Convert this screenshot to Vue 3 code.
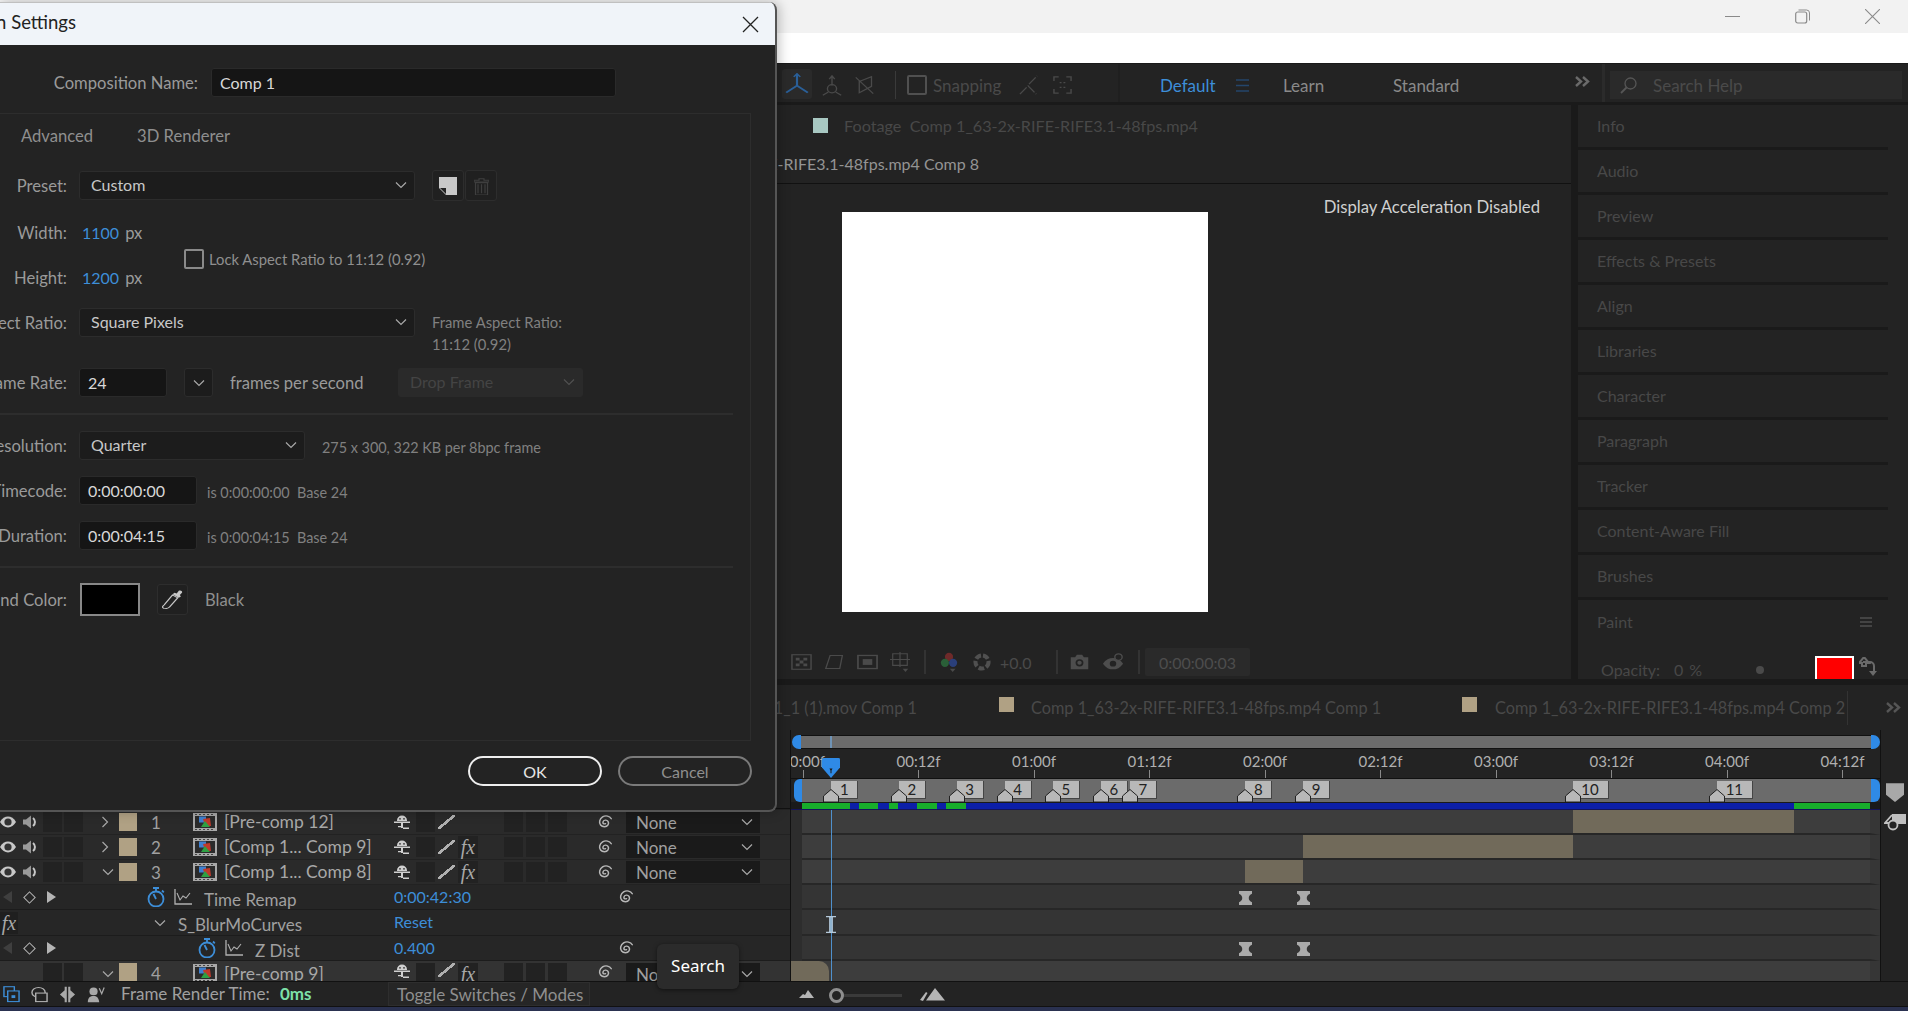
<script setup>
const px = (f) => 11.5 + f * 9.625

const ticks = [
  { f: 0, t: '00:00f' }, { f: 12, t: '00:12f' }, { f: 24, t: '01:00f' }, { f: 36, t: '01:12f' },
  { f: 48, t: '02:00f' }, { f: 60, t: '02:12f' }, { f: 72, t: '03:00f' }, { f: 84, t: '03:12f' },
  { f: 96, t: '04:00f' }, { f: 108, t: '04:12f' },
]
const markers = [3, 10, 16, 21, 26, 31, 34, 46, 52, 80, 95].map((f, i) => ({ f, n: i + 1 }))
const cache = [
  { c: 'g', w: 48 }, { c: 'b', w: 9 }, { c: 'g', w: 19 }, { c: 'b', w: 11 }, { c: 'g', w: 9 },
  { c: 'b', w: 19 }, { c: 'g', w: 20 }, { c: 'b', w: 9 }, { c: 'g', w: 20 }, { c: 'b', w: 828 }, { c: 'g', w: 76 },
]
const panels = ['Info', 'Audio', 'Preview', 'Effects & Presets', 'Align', 'Libraries', 'Character', 'Paragraph', 'Tracker', 'Content-Aware Fill', 'Brushes']
const tracks = [
  { cls: 'lit', clip: [80, 103] },
  { cls: 'lit', clip: [52, 80] },
  { cls: 'lit', clip: [46, 52] },
  { cls: 'sub', keys: [46, 52] },
  { cls: 'sub tall' },
  { cls: 'sub', keys: [46, 52] },
  { cls: 'lit last', clip: [-1.15, 2.8], round: true },
]
</script>

<template>
  <div class="page">
    <svg class="defs" width="0" height="0">
      <defs>
        <symbol id="eye" viewBox="0 0 16 16"><path d="M0 8c2-3.600 5-5.400 8-5.400s6 1.800 8 5.400c-2 3.600-5 5.400-8 5.400S2 11.600 0 8z" fill="#c8c8c8"/><circle cx="8" cy="8" r="3.600" fill="#333"/></symbol>
        <symbol id="speaker" viewBox="0 0 17 14" preserveAspectRatio="none"><path d="M1 4.500h3l5-4v13l-5-4H1z" fill="#9a9a9a"/><path d="M11 3c2.600 2 2.600 6 0 8" fill="none" stroke="#c8c8c8" stroke-width="2"/></symbol>
        <symbol id="src" viewBox="0 0 24 18"><rect width="24" height="18" fill="#a8a8a8"/><path d="M2 1h2v1H2zM6 1h2v1H6zM10 1h2v1h-2zM14 1h2v1h-2zM18 1h2v1h-2zM2 16h2v1H2zM6 16h2v1H6zM10 16h2v1h-2zM14 16h2v1h-2zM18 16h2v1h-2z" fill="#444"/><rect x="2" y="3" width="20" height="12" fill="#2b2b2b"/><rect x="6" y="3.500" width="7" height="6" fill="#3f80d0"/><path d="M10 6l7-1 1 8h-6z" fill="#c0392b"/><path d="M8 14l4-6 5 6z" fill="#2ea043"/></symbol>
        <symbol id="shy" viewBox="0 0 18 14" preserveAspectRatio="none"><path d="M4 5.500a5 5 0 0 1 10 0V6H4z" fill="#d0d0d0"/><path d="M1 6.500h16V8H1z" fill="#d0d0d0"/><path d="M8 8h2v5H8z" fill="#d0d0d0"/><path d="M5 11h3v1.300H5zM10 12.500h6V14h-6z" fill="#d0d0d0"/><circle cx="7" cy="3.800" r=".9" fill="#333"/><circle cx="11" cy="3.800" r=".9" fill="#333"/></symbol>
        <symbol id="spiral" viewBox="0 0 18 18" preserveAspectRatio="none"><path d="M9.500 10.800c-1.500 1-3-.3-2.500-2 .6-2.200 3.800-2.500 5-.5 1.500 2.500-.3 6-3.500 6-3.300 0-5.500-3-4.800-6.500C4.500 3.800 8 1.500 11.500 2.300c1.800.5 3 1.600 3.800 3" fill="none" stroke="#b8b8b8" stroke-width="1.500" stroke-linecap="round"/></symbol>
        <symbol id="watch" viewBox="0 0 18 20" preserveAspectRatio="none"><circle cx="9" cy="12" r="7.500" fill="none" stroke="#3d8ed8" stroke-width="1.800"/><path d="M6 1h6M9 1v3M9 12L6.500 7M15 3.500l1.800 1.800" stroke="#3d8ed8" stroke-width="1.800" fill="none"/></symbol>
        <symbol id="graph" viewBox="0 0 18 16" preserveAspectRatio="none"><path d="M1 0v15h17" fill="none" stroke="#b0b0b0" stroke-width="1.300"/><path d="M3 4l3 7 3-4 3 2 4-5" fill="none" stroke="#b0b0b0" stroke-width="1.100"/></symbol>
        <symbol id="chev" viewBox="0 0 12 8"><path d="M1 1.500l5 5 5-5" fill="none" stroke="#a8a8a8" stroke-width="1.200"/></symbol>
        <symbol id="key" viewBox="0 0 16 18" preserveAspectRatio="none"><path d="M0 0h16v3.500c-2.500 1-4 3-4 5.500s1.500 4.500 4 5.500V18H0v-3.500c2.500-1 4-3 4-5.500s-1.500-4.500-4-5.500z" fill="#ababab"/></symbol>
      </defs>
    </svg>

    <div class="titlebar">
      <svg class="winbtn" viewBox="0 0 15 15"><path d="M0 7.500h15" stroke="#8a8a8a" stroke-width="1"/></svg>
      <svg class="winbtn" viewBox="0 0 15 15"><rect x=".7" y="3" width="11" height="11" rx="2" fill="none" stroke="#8a8a8a" stroke-width="1.200"/><path d="M3.500 1h8a3 3 0 0 1 3 3v7.500" fill="none" stroke="#8a8a8a"/></svg>
      <svg class="winbtn" viewBox="0 0 15 15"><path d="M0 0l15 15M15 0L0 15" stroke="#8a8a8a" stroke-width="1.100"/></svg>
    </div>
    <div class="menustrip"></div>

    <div class="toolbar">
      <div class="tool-active">
        <svg width="26" height="22" viewBox="0 0 24 28" preserveAspectRatio="none"><path d="M12 1v15M12 16L2 25M12 16l10 9" stroke="#2a5f98" stroke-width="2" fill="none"/><path d="M9 5l3-4 3 4" stroke="#2a5f98" stroke-width="1.500" fill="none"/></svg>
      </div>
      <svg class="tool-ic first" width="22" height="21" viewBox="0 0 24 26" preserveAspectRatio="none"><path d="M12 1v12M9 5l3-4 3 4" stroke="#4a4a4a" stroke-width="1.500" fill="none"/><circle cx="12" cy="17" r="5" fill="none" stroke="#4a4a4a" stroke-width="1.500"/><path d="M8 21l-6 4M16 21l6 4" stroke="#4a4a4a" stroke-width="1.500"/></svg>
      <svg class="tool-ic" width="21" height="21" viewBox="0 0 24 26" preserveAspectRatio="none"><path d="M2 3l20 20M6 8l14-6v12L6 22z" stroke="#4a4a4a" stroke-width="1.500" fill="none"/></svg>
      <div class="tool-sep"></div>
      <span class="snap-box"></span>
      <span class="snap-text">Snapping</span>
      <svg class="tool-ic snap1" width="20" height="20" viewBox="0 0 22 24" preserveAspectRatio="none"><path d="M1 23l9-10 9 10M11 11l9-10" stroke="#4a4a4a" stroke-width="1.500" fill="none" stroke-dasharray="11 2"/></svg>
      <svg class="tool-ic snap2" width="19" height="18" viewBox="0 0 20 22" preserveAspectRatio="none"><path d="M1 6V1h5M14 1h5v5M19 16v5h-5M6 21H1v-5M7 8h2M11 8h2M7 14h2M11 14h2" stroke="#4a4a4a" stroke-width="1.500" fill="none"/></svg>
      <div class="ws-sep"></div>
      <span class="ws default">Default</span>
      <svg class="ws-menu" width="14" height="13" viewBox="0 0 14 13"><path d="M0 1h13M0 6.500h13M0 12h13" stroke="#24466b" stroke-width="1.500"/></svg>
      <span class="ws learn">Learn</span>
      <span class="ws standard">Standard</span>
      <svg class="more" width="15" height="11" viewBox="0 0 15 11"><path d="M1 1l5 4.500L1 10M8 1l5 4.500L8 10" fill="none" stroke="#6a6a6a" stroke-width="2.400"/></svg>
      <div class="help-sep"></div>
      <div class="help">
        <svg width="17" height="17" viewBox="0 0 17 17"><circle cx="10.500" cy="6.500" r="5.500" fill="none" stroke="#565656" stroke-width="1.300"/><path d="M6.500 10.500L1 16" stroke="#565656" stroke-width="1.800"/></svg>
        <span>Search Help</span>
      </div>
    </div>

    <div class="main">
      <div class="viewer-col">
        <div class="footage-tab"><i class="sw teal"></i><span>Footage&nbsp; Comp 1_63-2x-RIFE-RIFE3.1-48fps.mp4</span></div>
        <div class="comp-tab"><span>Comp 1_63-2x-RIFE-RIFE3.1-48fps.mp4 Comp 8</span></div>
        <div class="stage">
          <div class="canvas"></div>
          <span class="accel">Display Acceleration Disabled</span>
        </div>
        <div class="viewbar">
          <svg class="vb" width="21" height="16" viewBox="0 0 22 22" preserveAspectRatio="none"><rect x="1" y="1" width="20" height="20" fill="none" stroke="#4a4a4a" stroke-width="1.500"/><path d="M5 5h4v4H5zM13 5h4v4h-4zM9 9h4v4H9zM5 13h4v4H5zM13 13h4v4h-4z" fill="#4a4a4a"/></svg>
          <svg class="vb" width="21" height="16" viewBox="0 0 24 22" preserveAspectRatio="none"><path d="M7 2h14l-3 18H2z" fill="none" stroke="#4a4a4a" stroke-width="1.500"/></svg>
          <svg class="vb" width="21" height="16" viewBox="0 0 22 22" preserveAspectRatio="none"><rect x="1" y="2" width="20" height="18" fill="none" stroke="#4a4a4a" stroke-width="1.800"/><rect x="6" y="7" width="10" height="8" fill="#4a4a4a"/></svg>
          <svg class="vb" width="20" height="20" viewBox="0 0 22 24" preserveAspectRatio="none"><path d="M3 2h16v14H3zM11 0v18M0 9h22" fill="none" stroke="#4a4a4a" stroke-width="1.300"/><path d="M14 20h6l-3 4z" fill="#4a4a4a"/></svg>
          <i class="vb-sep"></i>
          <svg class="vb" width="18" height="20" viewBox="0 0 22 24" preserveAspectRatio="none"><circle cx="11" cy="6" r="5" fill="#6e2a2a"/><circle cx="6" cy="13" r="5" fill="#2a5f38"/><circle cx="16" cy="13" r="5" fill="#2a3f7a"/><path d="M12 20h7l-3.500 4z" fill="#4a4a4a"/></svg>
          <svg class="vb aperture" width="18" height="18" viewBox="0 0 22 22"><circle cx="11" cy="11" r="8" fill="none" stroke="#505050" stroke-width="5" stroke-dasharray="7 2.500"/></svg>
          <span class="exposure">+0.0</span>
          <i class="vb-sep"></i>
          <svg class="vb camera" width="21" height="16" viewBox="0 0 24 20" preserveAspectRatio="none"><path d="M2 4h5l2-3h6l2 3h5v15H2z" fill="#4d4d4d"/><circle cx="12" cy="11" r="4.500" fill="#232323"/><circle cx="12" cy="11" r="2.500" fill="#4d4d4d"/></svg>
          <svg class="vb" width="22" height="18" viewBox="0 0 24 22" preserveAspectRatio="none"><path d="M1 13c3-5 7-7 11-7s8 2 11 7c-3 5-7 7-11 7S4 18 1 13z" fill="#4d4d4d"/><circle cx="12" cy="13" r="3.500" fill="#232323"/><circle cx="18" cy="5" r="4" fill="#232323" stroke="#4d4d4d" stroke-width="1.500"/></svg>
          <i class="vb-sep"></i>
          <span class="vb-time">0:00:00:03</span>
        </div>
      </div>
      <div class="panels">
        <div v-for="p in panels" :key="p" class="pitem">{{ p }}</div>
        <div class="pitem paint">
          <span>Paint</span>
          <svg width="12" height="10" viewBox="0 0 12 10"><path d="M0 1h12M0 5h12M0 9h12" stroke="#505050" stroke-width="1.300"/></svg>
        </div>
        <div class="opacity">
          <span>Opacity:</span><span class="op-val">0</span><span>%</span>
          <i class="op-dot"></i>
          <i class="red"></i>
          <svg class="swap" width="18" height="20" viewBox="0 0 18 20"><path d="M5 0L0 6h3v3h4V6h3zM4 5h7a4 4 0 0 1 4 4v5" fill="none" stroke="#6a6a6a" stroke-width="2"/><path d="M10 14h8l-4 5z" fill="#6a6a6a"/></svg>
        </div>
      </div>
    </div>

    <div class="timeline">
      <div class="tl-tabs">
        <div class="tl-tab1">Comp 1_63-2x-RIFE-RIFE3.1_1 (1).mov Comp 1</div>
        <i class="sw tan tl-sw"></i>
        <span class="tl-text">Comp 1_63-2x-RIFE-RIFE3.1-48fps.mp4 Comp 1</span>
        <i class="sw tan tl-sw2"></i>
        <span class="tl-text t2">Comp 1_63-2x-RIFE-RIFE3.1-48fps.mp4 Comp 2</span>
        <i class="tl-end"></i>
        <svg class="tl-more" width="15" height="11" viewBox="0 0 15 11"><path d="M1 1l5 4.500L1 10M8 1l5 4.500L8 10" fill="none" stroke="#565656" stroke-width="2.400"/></svg>
      </div>

      <div class="tl-body">
        <div class="layers">
          <div class="layers-head"></div>

          <div class="layer">
            <svg class="i16"><use href="#eye"/></svg><svg class="ispk"><use href="#speaker"/></svg><i class="cell"></i><i class="cell"></i>
            <svg class="ichev rot"><use href="#chev"/></svg><i class="sw tan ls"></i><span class="num">1</span>
            <svg class="isrc"><use href="#src"/></svg><span class="name">[Pre-comp 12]</span>
            <svg class="ishy"><use href="#shy"/></svg><i class="cell"></i><span class="slash"></span><i class="nofx"></i><b></b>
            <i class="cell"></i><i class="cell"></i><i class="cell"></i><b></b>
            <svg class="ispi"><use href="#spiral"/></svg>
            <div class="drop"><span>None</span><svg class="ichev"><use href="#chev"/></svg></div>
          </div>
          <div class="layer">
            <svg class="i16"><use href="#eye"/></svg><svg class="ispk"><use href="#speaker"/></svg><i class="cell"></i><i class="cell"></i>
            <svg class="ichev rot"><use href="#chev"/></svg><i class="sw tan ls"></i><span class="num">2</span>
            <svg class="isrc"><use href="#src"/></svg><span class="name">[Comp 1... Comp 9]</span>
            <svg class="ishy"><use href="#shy"/></svg><i class="cell"></i><span class="slash"></span><em class="fx">fx</em><b></b>
            <i class="cell"></i><i class="cell"></i><i class="cell"></i><b></b>
            <svg class="ispi"><use href="#spiral"/></svg>
            <div class="drop"><span>None</span><svg class="ichev"><use href="#chev"/></svg></div>
          </div>
          <div class="layer open">
            <svg class="i16"><use href="#eye"/></svg><svg class="ispk"><use href="#speaker"/></svg><i class="cell"></i><i class="cell"></i>
            <svg class="ichev"><use href="#chev"/></svg><i class="sw tan ls"></i><span class="num">3</span>
            <svg class="isrc"><use href="#src"/></svg><span class="name">[Comp 1... Comp 8]</span>
            <svg class="ishy"><use href="#shy"/></svg><i class="cell"></i><span class="slash"></span><em class="fx">fx</em><b></b>
            <i class="cell"></i><i class="cell"></i><i class="cell"></i><b></b>
            <svg class="ispi"><use href="#spiral"/></svg>
            <div class="drop"><span>None</span><svg class="ichev"><use href="#chev"/></svg></div>
          </div>

          <div class="prop">
            <div class="nav"><i class="tri l"></i><i class="dia"></i><i class="tri r"></i></div>
            <div class="pname d1">
              <svg class="iwatch"><use href="#watch"/></svg><svg class="igraph"><use href="#graph"/></svg><span>Time Remap</span>
            </div>
            <span class="val">0:00:42:30</span>
            <svg class="ispi sp2"><use href="#spiral"/></svg>
          </div>
          <div class="prop tall">
            <div class="nav"><em class="fx fx0">fx</em></div>
            <div class="pname d0">
              <svg class="ichev"><use href="#chev"/></svg><span>S_BlurMoCurves</span>
            </div>
            <span class="val">Reset</span>
          </div>
          <div class="prop">
            <div class="nav"><i class="tri l"></i><i class="dia"></i><i class="tri r"></i></div>
            <div class="pname d2">
              <svg class="iwatch"><use href="#watch"/></svg><svg class="igraph"><use href="#graph"/></svg><span>Z Dist</span>
            </div>
            <span class="val">0.400</span>
            <svg class="ispi sp2"><use href="#spiral"/></svg>
          </div>

          <div class="layer sel">
            <i class="cell none"></i><i class="cell none"></i><i class="cell"></i><i class="cell"></i>
            <svg class="ichev"><use href="#chev"/></svg><i class="sw tan ls"></i><span class="num">4</span>
            <svg class="isrc"><use href="#src"/></svg><span class="name">[Pre-comp 9]</span>
            <svg class="ishy"><use href="#shy"/></svg><i class="cell"></i><span class="slash"></span><em class="fx">fx</em><b></b>
            <i class="cell"></i><i class="cell"></i><i class="cell"></i><b></b>
            <svg class="ispi"><use href="#spiral"/></svg>
            <div class="drop"><span>None</span><svg class="ichev"><use href="#chev"/></svg></div>
          </div>
        </div>

        <div class="tracks">
          <div class="workbar">
            <i class="wb-handle left"></i>
            <div class="wb-fill"><i class="wb-mark"></i></div>
            <i class="wb-handle right"></i>
          </div>
          <div class="ruler">
            <div v-for="t in ticks" :key="t.f" class="tick" :style="{ left: px(t.f) + 'px' }"><span>{{ t.t }}</span><i></i></div>
            <svg class="head" width="18" height="20" viewBox="0 0 18 21" preserveAspectRatio="none"><path d="M0 1.500Q0 0 1.500 0h15Q18 0 18 1.500V10l-9 11-9-11z" fill="#2f8ae6"/><path d="M7.500 11h3l-1 2v3h-1v-3z" fill="#1a1a1a"/></svg>
          </div>
          <div class="markerbar">
            <i class="mb-handle left"></i>
            <div class="mb-fill"></div>
            <i class="mb-handle right"></i>
            <div v-for="m in markers" :key="m.n" class="marker" :style="{ left: px(m.f) + 'px' }">
              <span class="m-label" :class="{ wide: m.n > 9 }">{{ m.n }}</span>
              <svg class="m-home" width="16" height="13" viewBox="0 0 16 13"><path d="M.5 13V7L8 .5 15.500 7v6z" fill="#b8b8b8" stroke="#222" stroke-width="1"/></svg>
            </div>
          </div>
          <div class="cachebar">
            <i v-for="(s, i) in cache" :key="i" :class="s.c" :style="{ width: s.w + 'px' }"></i>
          </div>
          <div class="rows">
            <div v-for="(t, i) in tracks" :key="i" class="trow" :class="t.cls">
              <div
                v-if="t.clip"
                class="clip"
                :class="{ rounded: t.round }"
                :style="{ left: px(t.clip[0]) - 11 + 'px', width: (t.clip[1] - t.clip[0]) * 9.625 + 'px' }"
              ></div>
              <svg v-for="k in t.keys || []" :key="k" class="kf" :style="{ left: px(k) - 17.5 + 'px' }"><use href="#key"/></svg>
            </div>
            <div class="playline"></div>
            <svg class="ibeam" width="10" height="17" viewBox="0 0 10 17"><path d="M0 .7h10M0 16.300h10" stroke="#b5c9da" stroke-width="1.300"/><path d="M3.500 1h3v15h-3z" fill="#8fb3cf" stroke="#b5c9da" stroke-width=".8"/></svg>
          </div>
        </div>

        <div class="sidecol">
          <svg class="bin" width="18" height="21" viewBox="0 0 18 23" preserveAspectRatio="none"><path d="M0 1.500h18V14l-9 8-9-8z" fill="#a8a8a8"/></svg>
          <svg class="cm" width="22" height="20" viewBox="0 0 22 20"><path d="M8 2h14v10H8z" fill="#c0c0c0"/><path d="M8 3L1 11h6" fill="none" stroke="#c0c0c0" stroke-width="1.800"/><circle cx="9" cy="13" r="4.500" fill="#232323" stroke="#c0c0c0" stroke-width="1.800"/></svg>
        </div>
      </div>

      <div class="statusbar">
        <div class="st-icons">
          <svg width="17" height="17" viewBox="0 0 18 24" preserveAspectRatio="none"><rect x="1" y="1" width="11" height="14" fill="none" stroke="#3d8ed8" stroke-width="1.500"/><rect x="5" y="7" width="12" height="15" fill="#232323" stroke="#3d8ed8" stroke-width="1.500"/><rect x="9" y="13" width="4" height="4" fill="#3d8ed8"/></svg>
          <svg width="17" height="17" viewBox="0 0 18 24" preserveAspectRatio="none"><circle cx="8" cy="9" r="7" fill="none" stroke="#b0b0b0" stroke-width="1.500"/><rect x="5" y="10" width="12" height="12" fill="#232323" stroke="#b0b0b0" stroke-width="1.500"/></svg>
          <svg width="17" height="17" viewBox="0 0 18 24" preserveAspectRatio="none"><path d="M6 1h6v5l5 6-5 6v5H6v-5L1 12l5-6z" fill="#a8a8a8"/><path d="M9 0v24" stroke="#232323" stroke-width="1.500"/></svg>
          <svg width="18" height="17" viewBox="0 0 22 22" preserveAspectRatio="none"><circle cx="8" cy="7" r="5" fill="#a8a8a8"/><path d="M1 21c0-6 3-8 7-8s6 2 7 8z" fill="#a8a8a8"/><path d="M15 3l3 7 3-8" fill="none" stroke="#a8a8a8" stroke-width="1.500"/></svg>
        </div>
        <span class="st-label">Frame Render Time:</span>
        <span class="st-ms">0ms</span>
        <div class="st-toggle">Toggle Switches / Modes</div>
        <div class="zoomer">
          <svg width="15" height="8" viewBox="0 0 15 8"><path d="M0 8l4-4 2 1 3-5 6 8z" fill="#b5b5b5"/></svg>
          <div class="slider"><i class="knob"></i></div>
          <svg width="25" height="13" viewBox="0 0 25 13"><path d="M0 12l6-8 1.500 1L3 13zM6 12.500L15 0l10 12.500z" fill="#b5b5b5"/></svg>
        </div>
      </div>
    </div>
    <div class="taskstrip"></div>

    <div class="dialog">
      <div class="dlg-title">
        <span class="dlg-name">Composition Settings</span>
        <svg width="17" height="17" viewBox="0 0 17 17"><path d="M1 1l15 15M16 1L1 16" stroke="#222" stroke-width="1.300"/></svg>
      </div>
      <div class="dlg-body">
        <div class="name-row">
          <label class="lbl name-lbl">Composition Name:</label>
          <div class="field name-field">Comp 1</div>
        </div>
        <div class="group">
          <div class="tabs"><span class="tab-clip"><span>Basic</span></span><span>Advanced</span><span class="tab3d">3D Renderer</span></div>

          <div class="frow r-preset">
            <label class="lbl">Preset:</label>
            <div class="select wide"><span>Custom</span><svg class="ichev"><use href="#chev"/></svg></div>
            <button class="sq first">
              <svg width="18" height="18" viewBox="0 0 18 18"><path d="M0 0h18v18H7l-7-7z" fill="#c8c8c8"/><path d="M1 11h6v6z" fill="#222"/></svg>
            </button>
            <button class="sq">
              <svg width="15" height="18" viewBox="0 0 15 22" preserveAspectRatio="none"><path d="M5 2h5v2h5v2H0V4h5zM1.500 7h12v15h-12zM4 9v11M7.500 9v11M11 9v11" fill="none" stroke="#3f3f3f" stroke-width="1.200"/></svg>
            </button>
          </div>

          <div class="dims">
            <div class="dim-col">
              <div class="frow dim"><label class="lbl">Width:</label><span class="blue">1100</span><span class="unit">px</span></div>
              <div class="frow dim"><label class="lbl">Height:</label><span class="blue">1200</span><span class="unit">px</span></div>
            </div>
            <div class="lock"><i class="check"></i><span>Lock Aspect Ratio to 11:12 (0.92)</span></div>
          </div>

          <div class="frow r-par">
            <label class="lbl">Pixel Aspect Ratio:</label>
            <div class="select wide"><span>Square Pixels</span><svg class="ichev"><use href="#chev"/></svg></div>
            <div class="far"><div>Frame Aspect Ratio:</div><div>11:12 (0.92)</div></div>
          </div>

          <div class="frow r-rate">
            <label class="lbl">Frame Rate:</label>
            <div class="field rate">24</div>
            <div class="select mini"><svg class="ichev"><use href="#chev"/></svg></div>
            <span class="txt fps">frames per second</span>
            <div class="select disabled"><span>Drop Frame</span><svg class="ichev"><use href="#chev"/></svg></div>
          </div>

          <hr class="sep" />

          <div class="frow r-res">
            <label class="lbl">Resolution:</label>
            <div class="select res"><span>Quarter</span><svg class="ichev"><use href="#chev"/></svg></div>
            <span class="note">275 x 300, 322 KB per 8bpc frame</span>
          </div>
          <div class="frow r-tc">
            <label class="lbl">Start Timecode:</label>
            <div class="field tc">0:00:00:00</div>
            <span class="note tcn">is 0:00:00:00&nbsp; Base 24</span>
          </div>
          <div class="frow r-tc">
            <label class="lbl">Duration:</label>
            <div class="field tc">0:00:04:15</div>
            <span class="note tcn">is 0:00:04:15&nbsp; Base 24</span>
          </div>

          <hr class="sep s2" />

          <div class="frow r-bg">
            <label class="lbl">Background Color:</label>
            <i class="swatch"></i>
            <button class="sq drop-btn">
              <svg width="21" height="20" viewBox="0 0 20 28" preserveAspectRatio="none"><path d="M16 1c2-1 4 1 3 3l-2 3 1 2-2 2-6-5 2-2 2 1z" fill="#c8c8c8"/><path d="M10 7l5 4-8 13c-1 2-5 3-6 1-1-1 0-3 1-4z" fill="#232323" stroke="#c8c8c8" stroke-width="1.300"/></svg>
            </button>
            <span class="txt black">Black</span>
          </div>
        </div>
        <div class="actions">
          <button class="pill ok">OK</button>
          <button class="pill cancel">Cancel</button>
        </div>
      </div>
    </div>

    <div class="tooltip">Search</div>
  </div>
</template>

<style>
html, body { margin: 0; background: #232323; overflow: hidden; }
</style>

<style scoped>
.page {
  position: relative;
  width: 1908px;
  height: 1011px;
  overflow: hidden;
  display: flex;
  flex-direction: column;
  background: #1a1a1a;
  font-family: "Lato", "Noto Sans", sans-serif;
  font-size: 16px;
  color: #a0a0a0;
}
.defs { position: absolute; }
i, em { display: block; font-style: normal; }

.titlebar { height: 33px; background: #f2f2f2; display: flex; justify-content: flex-end; align-items: center; padding-right: 28px; gap: 55px; flex: none; }
.winbtn { width: 15px; height: 15px; margin-top: -1px; }
.menustrip { height: 30px; background: #fff; flex: none; }

.toolbar { height: 38px; box-sizing: border-box; padding: 4px 0 0 782px; margin-top: 1px; background: #232323; flex: none; display: flex; align-items: center; font-size: 17px; }
.tool-active { width: 30px; height: 30px; background: #2a2a2a; border-radius: 3px; display: flex; justify-content: center; align-items: center; margin-top: -2px; }
.tool-ic.first { margin-left: 9px; }
.tool-ic { margin-left: 11px; }
.tool-sep { width: 1px; height: 28px; background: #3a3a3a; margin-left: 20px; }
.snap-box { width: 20px; height: 20px; box-sizing: border-box; border: 2px solid #505050; border-radius: 2px; margin-left: 11px; }
.snap-text { color: #4a4a4a; margin-left: 6px; width: 74px; }
.tool-ic.snap1 { margin-left: 12px; }
.tool-ic.snap2 { margin-left: 14px; }
.ws-sep { width: 2px; height: 38px; background: #1f1f1f; margin: -4px 0 0 46px; align-self: flex-start; }
.ws { color: #8a8a8a; }
.default { color: #3d8ed8; margin-left: 40px; width: 58px; }
.ws-menu { margin-left: 18px; }
.learn { margin-left: 33px; width: 110px; }
.standard { width: 182px; }
.more { margin-top: -8px; }
.help-sep { width: 3px; height: 38px; background: #2b2b2b; margin: -4px 0 0 12px; align-self: flex-start; }
.help { width: 292px; height: 28px; margin-left: 5px; background: #2a2a2a; display: flex; align-items: center; gap: 16px; padding-left: 10px; box-sizing: border-box; color: #4a4a4a; }

.main { flex: none; height: 574px; margin-top: 3px; display: flex; gap: 7px; }
.viewer-col { width: 1571px; display: flex; flex-direction: column; background: #232323; }
.footage-tab { height: 41px; padding-left: 813px; display: flex; align-items: center; gap: 16px; color: #484848; flex: none; padding-bottom: 1px; box-sizing: border-box; font-size: 16.200px; }
.sw { width: 15px; height: 15px; flex: none; }
.teal { background: #a8c8c2; }
.tan { background: #b0a184; }
.comp-tab { height: 38px; flex: none; border-bottom: 1px solid #111; display: flex; align-items: center; justify-content: flex-end; box-sizing: border-box; padding: 0 592px 2px 0; color: #949494; white-space: nowrap; }
.stage { flex: 1; min-height: 0; display: flex; justify-content: space-between; padding: 28px 31px 0 842px; }
.canvas { width: 366px; height: 400px; background: #fff; }
.accel { color: #d0d0d0; font-size: 16.700px; margin-top: -15px; height: 24px; }
.viewbar { height: 34px; flex: none; display: flex; align-items: center; padding-left: 791px; }
.vb { margin-right: 12px; flex: none; }
.vb-sep { width: 2px; height: 24px; background: #333; margin: 0 14px 0 2px; flex: none; }
.aperture { margin-left: 3px; }
.exposure { color: #4a4a4a; width: 54px; margin-left: -3px; }
.camera { margin-left: -3px; }
.vb-time { width: 105px; height: 28px; margin-left: -9px; background: #2a2a2a; color: #4d4d4d; display: flex; align-items: center; justify-content: center; border-radius: 2px; }

.panels { flex: 1; background: #232323; display: flex; flex-direction: column; color: #484848; overflow: hidden; }
.pitem { height: 45px; flex: none; box-sizing: border-box; width: 310px; border-bottom: 3px solid #1a1a1a; display: flex; align-items: center; padding-left: 19px; padding-bottom: 2px; }
.paint { justify-content: space-between; border-bottom: 0; width: 294px; }
.opacity { display: flex; align-items: center; padding-left: 23px; height: 23px; margin-top: 13px; flex: none; }
.op-val { margin: 0 6px 0 14px; }
.op-dot { width: 8px; height: 8px; border-radius: 50%; background: #4a4a4a; margin-left: 54px; }
.red { width: 39px; height: 26px; box-sizing: border-box; border: 2px solid #fff; border-bottom: 0; background: #f00; margin: -2px 0 0 51px; align-self: flex-start; }
.swap { margin: -6px 0 0 5px; }

.timeline { flex: none; margin-top: 6px; height: 321px; background: #232323; display: flex; flex-direction: column; }
.tl-tabs { height: 45px; flex: none; display: flex; align-items: center; color: #494949; white-space: nowrap; font-size: 16.300px; }
.tl-tab1 { width: 917px; text-align: right; flex: none; }
.tl-sw { margin-left: 82px; margin-top: -7px; }
.tl-sw2 { margin-top: -7px; }
.tl-text { margin-left: 17px; width: 431px; flex: none; }
.tl-text.t2 { margin-left: 18px; width: 352px; }
.tl-end { width: 1px; height: 34px; background: #333; flex: none; }
.tl-more { margin-left: 38px; }

.tl-body { flex: 1; min-height: 0; display: flex; }
.layers { width: 790px; flex: none; display: flex; flex-direction: column; border-right: 1px solid #111; overflow: hidden; height: 251px; }
.layers-head { height: 78px; flex: none; border-bottom: 1px solid #111; margin-bottom: 1px; }
.layer {
  height: 25px; flex: none; box-sizing: border-box;
  display: grid;
  grid-template-columns: 22px 21px 21px 22px 29px 25px 50px 31px 172px 23px 20px 22px 22px 24px 22px 22px 22px 26px 30px 134px 1fr;
  align-items: center;
  background: #2a2a2a;
  border-bottom: 1px solid #222;
  white-space: nowrap;
  font-size: 17px;
}
.layer.sel { height: 21px; background: #333; align-items: start; padding-top: 2px; border-bottom: 0; flex: 1; }
.layer.sel .ichev { margin-top: 7px; }
.layer.sel .drop .ichev { margin-top: 0; }
.layer.sel .ishy, .layer.sel .isrc, .layer.sel .ispi { margin-top: 1px; }
.i16 { width: 16px; height: 16px; }
.ispk { width: 17px; height: 14px; }
.cell { width: 19px; height: 20px; background: #222; }
.cell.none { background: transparent; }
.ichev { width: 12px; height: 8px; margin-left: 16px; }
.ichev.rot { transform: rotate(-90deg); margin-left: 13px; }
.ls { width: 18px; height: 18px; margin-left: 4px; }
.num { padding-left: 11px; }
.isrc { width: 24px; height: 18px; margin-left: 3px; }
.name { color: #a8a8a8; overflow: hidden; margin: -1px 0 0 3px; font-size: 17.500px; line-height: 23px; }
.ishy { width: 18px; height: 14px; }
.slash { width: 17px; height: 14px; margin-left: 2px; background: linear-gradient(to top left, transparent 44%, #b0b0b0 44%, #b0b0b0 56%, transparent 56%); }
.fx { font-family: "Liberation Serif", serif; font-style: italic; font-size: 20px; color: #a8a8a8; background: #222; width: 20px; text-align: center; line-height: 22px; }
.nofx { width: 20px; }
.ispi { width: 18px; height: 16px; }
.drop { background: #1a1a1a; height: 22px; display: flex; align-items: center; justify-content: space-between; padding: 0 7px 0 10px; color: #a0a0a0; }
.drop .ichev { margin: 0; }
.prop { height: 25px; flex: none; display: flex; align-items: center; background: #262626; border-bottom: 1px solid #1c1c1c; box-sizing: border-box; }
.prop.tall { height: 26px; }
.nav { width: 66px; flex: none; display: flex; align-items: center; gap: 11px; padding-left: 3px; box-sizing: border-box; }
.tri { width: 0; height: 0; border-top: 6px solid transparent; border-bottom: 6px solid transparent; }
.tri.l { border-right: 9px solid #3f3f3f; }
.tri.r { border-left: 9px solid #b5b5b5; }
.dia { width: 9px; height: 9px; box-sizing: border-box; border: 1.500px solid #b5b5b5; transform: rotate(45deg); margin: 0 2px; }
.fx0 { background: #1f1f1f; margin-left: -3px; width: 18px; }
.pname { width: 328px; flex: none; display: flex; align-items: center; box-sizing: border-box; color: #a0a0a0; font-size: 17px; }
.pname span { margin-top: 4px; }
.pname.d1 { padding-left: 81px; }
.pname.d2 { padding-left: 132px; }
.pname.d0 { padding-left: 88px; }
.pname.d0 .ichev { margin: 0 12px 0 0; }
.iwatch { width: 18px; height: 20px; }
.igraph { width: 18px; height: 16px; margin: 0 12px 0 9px; }
.val { color: #3d8ed8; width: 223px; flex: none; margin-top: -2px; }

.tracks { width: 1089px; flex: none; display: flex; flex-direction: column; position: relative; overflow: hidden; }
.workbar { height: 14px; margin-top: 5px; flex: none; display: flex; align-items: stretch; }
.wb-handle { width: 9px; background: #2f8ae6; }
.wb-handle.left { border-radius: 7px 0 0 7px; margin-left: 1px; }
.wb-handle.right { border-radius: 0 7px 7px 0; }
.wb-fill { flex: 1; background: #6b6b6b; border-top: 1px solid #111; border-bottom: 1px solid #111; position: relative; }
.wb-mark { position: absolute; left: 29px; top: 0; width: 2px; height: 100%; background: #6f93b5; }
.ruler { height: 30px; flex: none; position: relative; border-bottom: 1px solid #111; box-sizing: border-box; overflow: hidden; }
.tick { position: absolute; top: 0; bottom: 0; width: 1px; display: flex; flex-direction: column; align-items: center; }
.tick span { font-size: 15px; color: #b0b0b0; line-height: 16px; margin-top: 4px; white-space: nowrap; }
.tick i { width: 1px; flex: 1; background: #8a8a8a; margin-top: 1px; }
.head { position: absolute; left: 31px; top: 9px; }
.markerbar { height: 23px; flex: none; display: flex; position: relative; }
.mb-handle { width: 9px; background: #2f8ae6; }
.mb-handle.left { border-radius: 6px 0 0 6px; margin-left: 3px; width: 8px; }
.mb-handle.right { border-radius: 0 6px 6px 0; }
.mb-fill { flex: 1; background: #6b6b6b; }
.marker { position: absolute; top: 0; width: 0; height: 23px; }
.m-label { position: absolute; left: 0; top: 2px; width: 27px; height: 18px; box-sizing: border-box; background: #b8b8b8; color: #222; border-right: 1px solid #444; border-bottom: 1px solid #444; font-size: 15px; line-height: 17px; text-align: center; }
.m-label.wide { width: 36px; }
.m-home { position: absolute; left: -8px; top: 10px; }
.cachebar { height: 8px; flex: none; display: flex; padding: 1px 0 0 11px; background: #1a1a1a; border-bottom: 1px solid #14145a; box-sizing: border-box; }
.cachebar .g { background: #17ad2b; height: 6px; }
.cachebar .b { background: #0c1fa8; height: 6px; }
.rows { flex: 1; min-height: 0; position: relative; display: flex; flex-direction: column; background: #2d2d2d; overflow: hidden; }
.trow { height: 25px; flex: none; position: relative; box-sizing: border-box; margin-left: 11px; border-bottom: 2px solid #272727; border-right: 10px solid #363636; }
.trow.lit { background: #3d3d3d; }
.trow.sub { background: #343434; }
.trow.tall { height: 26px; }
.trow.last { flex: 1; border-bottom: 0; }
.clip { position: absolute; top: 0; bottom: 0; background: #716a5a; }
.clip.rounded { border-top-right-radius: 10px; }
.kf { position: absolute; width: 13px; height: 14px; top: 6px; }
.playline { position: absolute; left: 40px; top: 0; bottom: 0; width: 1px; background: #4f90cc; }
.ibeam { position: absolute; left: 35px; top: 106px; }

.sidecol { flex: 1; display: flex; flex-direction: column; align-items: center; border-left: 1px solid #111; padding-top: 52px; gap: 9px; }
.statusbar { height: 25px; flex: none; display: flex; align-items: center; border-top: 1px solid #111; box-sizing: border-box; font-size: 17px; }
.st-icons { display: flex; align-items: center; width: 121px; padding-left: 3px; gap: 11px; box-sizing: border-box; flex: none; }
.st-label { color: #a0a0a0; width: 159px; flex: none; margin-top: -1px; }
.st-ms { color: #7de0a8; font-weight: 700; width: 108px; flex: none; font-size: 17px; margin-top: -1px; }
.st-toggle { width: 202px; height: 24px; background: #262626; border: 1px solid #2e2e2e; box-sizing: border-box; display: flex; align-items: center; padding-left: 8px; color: #8f8f8f; white-space: nowrap; flex: none; }
.zoomer { display: flex; align-items: center; margin-left: 209px; gap: 18px; }
.slider { width: 70px; height: 3px; background: #3a3a3a; position: relative; margin: 2px 0 0 0; }
.knob { position: absolute; left: -3px; top: -6px; width: 15px; height: 15px; box-sizing: border-box; border: 3px solid #8e8e8e; border-radius: 50%; background: #232323; }
.taskstrip { flex: 1; background: #2a3150; border-top: 1px solid #111; }

.dialog { position: absolute; left: 0; top: 2px; width: 775px; height: 808px; background: #232323; border-radius: 0 8px 8px 0; border-right: 2px solid #555; border-bottom: 2px solid #555; overflow: hidden; display: flex; flex-direction: column; box-shadow: 2px 0 12px rgba(0,0,0,.25); font-size: 16.600px; }
.dlg-title { height: 43px; flex: none; background: #f0f4f9; display: flex; align-items: center; justify-content: flex-end; padding-right: 16px; position: relative; color: #222; font-size: 18.500px; border-top: 1px solid #c0c0c0; box-sizing: border-box; }
.dlg-name { position: absolute; right: 699px; white-space: nowrap; margin-top: -4px; }
.dlg-body { flex: 1; position: relative; display: flex; flex-direction: column; }
.lbl { color: #9a9a9a; width: 67px; flex: none; display: flex; justify-content: flex-end; white-space: nowrap; }
.field { background: #151515; border: 1px solid #2a2a2a; border-radius: 3px; box-sizing: border-box; color: #d8d8d8; display: flex; align-items: center; height: 29px; padding-left: 8px; font-size: 16px; }
.name-row { display: flex; align-items: center; margin-top: 23px; flex: none; }
.name-lbl { width: 198px; }
.name-field { width: 405px; margin-left: 13px; }
.group { margin: 16px 24px 0 -10px; height: 628px; border: 1px solid #2d2d2d; box-sizing: border-box; flex: none; position: relative; padding-left: 9px; }
.tabs { height: 44px; display: flex; align-items: center; gap: 44px; color: #8f8f8f; position: relative; padding-left: 21px; }
.tab-clip { position: absolute; left: -60px; }
.frow { display: flex; align-items: center; flex: none; }
.frow > .lbl + * { margin-left: 12px; }
.r-preset { margin-top: 12px; height: 31px; }
.select { height: 29px; background: #1c1c1c; border: 1px solid #2c2c2c; border-radius: 3px; box-sizing: border-box; display: flex; align-items: center; justify-content: space-between; padding: 0 7px 2px 11px; color: #c8c8c8; flex: none; font-size: 16px; }
.select .ichev { margin: 0; }
.select.wide { width: 336px; }
.sq { width: 32px; height: 31px; background: #202020; border: 1px solid #2d2d2d; border-radius: 3px; padding: 0; display: flex; justify-content: center; align-items: center; margin: 0; box-sizing: border-box; flex: none; }
.sq.first { margin-left: 17px; margin-right: 1px; }
.dims { display: flex; margin-top: 20px; height: 80px; }
.dim-col { width: 184px; flex: none; display: flex; flex-direction: column; gap: 22px; }
.dim { height: 23px; }
.blue { color: #3d8ed8; font-size: 16px; }
.frow > .lbl + .blue { margin-left: 15px; }
.unit { margin-left: 6px; color: #9a9a9a; }
.lock { display: flex; align-items: center; gap: 5px; color: #8f8f8f; font-size: 14.800px; height: 23px; margin-top: 26px; }
.check { width: 20px; height: 20px; box-sizing: border-box; border: 2px solid #8a8a8a; border-radius: 2px; }
.r-par { margin-top: 7px; height: 29px; }
.far { margin-left: 17px; color: #808080; font-size: 14.800px; line-height: 22px; margin-top: 21px; }
.r-rate { margin-top: 31px; height: 29px; }
.rate { width: 88px; }
.select.mini { width: 29px; margin-left: 17px; padding: 0 0 0 8px; }
.fps { margin-left: 17px; width: 168px; color: #9a9a9a; white-space: nowrap; }
.select.disabled { width: 185px; background: #2a2a2a; border-color: #2a2a2a; color: #444; }
.select.disabled .ichev { opacity: .3; }
.sep { border: 0; height: 2px; background: #2d2d2d; margin: 16px 17px 0 -10px; }
.r-res { margin-top: 16px; height: 29px; }
.select.res { width: 226px; }
.note { color: #808080; font-size: 14.400px; margin-left: 17px; padding-top: 3px; white-space: nowrap; }
.r-tc { margin-top: 16px; height: 29px; }
.tc { width: 118px; }
.note.tcn { margin-left: 10px; }
.r-bg { margin-top: 15px; height: 33px; }
.swatch { width: 60px; height: 33px; background: #000; border: 2px solid #888; box-sizing: border-box; flex: none; margin-left: 13px !important; }
.drop-btn { margin-left: 17px; width: 31px; }
.black { color: #8f8f8f; margin-left: 17px; }
.actions { display: flex; justify-content: flex-end; gap: 16px; padding-right: 23px; margin-top: 15px; }
.pill { width: 134px; height: 30px; box-sizing: border-box; border-radius: 15px; background: transparent; font: inherit; font-size: 16px; padding: 0; }
.ok { border: 2px solid #eee; color: #e6e6e6; }
.cancel { border: 2px solid #7a7a7a; color: #8f8f8f; }

.tooltip { position: absolute; left: 657px; top: 944px; width: 82px; height: 45px; border-radius: 6px; background: #2b2b2b; color: #fff; font-family: "Noto Sans", sans-serif; font-size: 17px; padding-bottom: 2px; box-sizing: border-box; display: flex; align-items: center; justify-content: center; box-shadow: 0 1px 4px rgba(0,0,0,.5); }
</style>
